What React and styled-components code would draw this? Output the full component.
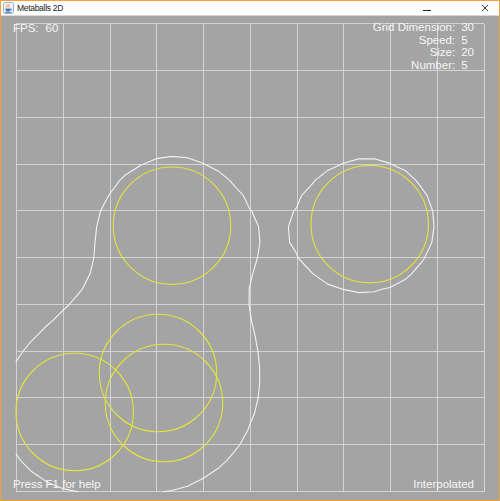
import React, { useMemo } from 'react';
import styled, { createGlobalStyle } from 'styled-components';

const GlobalStyle = createGlobalStyle`
  html, body {
    margin: 0;
    padding: 0;
    background: #ffffff;
  }
`;

// page coordinates of the board (taken from the window at 500x501)
const GRID_X = 16;
const GRID_Y = 24.25;
const GRID_SIZE = 467.5;
const GRID_DIM = 30;
const RADIUS = 58.7;

const BALLS = [
  [172, 225.7],
  [369.7, 224.2],
  [74.7, 412],
  [158, 373],
  [164, 403],
];

const Window = styled.div`
  width: 500px;
  height: 501px;
  box-sizing: border-box;
  border: 1px solid #f0a13a;
  display: flex;
  flex-direction: column;
  overflow: hidden;
`;

const TitleBar = styled.div`
  height: 14px;
  flex: none;
  display: flex;
  align-items: center;
  background: #ffffff;
  border-bottom: 1px solid #d9d9d9;
  padding-left: 2px;
`;

const Title = styled.span`
  margin-left: 3px;
  font-family: 'Liberation Sans', Arial, sans-serif;
  font-size: 8.5px;
  letter-spacing: -0.3px;
  color: #1a1a1a;
  line-height: 14px;
`;

const Controls = styled.div`
  margin-left: auto;
  display: flex;
  align-items: center;
  height: 14px;
`;

const ControlButton = styled.div`
  width: ${(p) => p.$width}px;
  height: 14px;
  display: flex;
  align-items: center;
  justify-content: center;
`;

const Canvas = styled.div`
  position: relative;
  flex: 1;
  background: #a4a4a4;
  overflow: hidden;
`;

const Board = styled.svg`
  display: block;
`;

const Hud = styled.div`
  position: absolute;
  ${(p) => p.$top !== undefined && `top: ${p.$top}px;`}
  ${(p) => p.$bottom !== undefined && `bottom: ${p.$bottom}px;`}
  ${(p) => p.$left !== undefined && `left: ${p.$left}px;`}
  ${(p) => p.$right !== undefined && `right: ${p.$right}px;`}
  font-family: 'Liberation Sans', Arial, sans-serif;
  font-size: 11.5px;
  line-height: 12.5px;
  color: #f6f6f6;
  white-space: nowrap;
`;

const FpsRow = styled.div`
  display: flex;
  gap: 7px;
`;

const Stats = styled.div`
  display: grid;
  grid-template-columns: auto auto;
  column-gap: 6px;
`;

const StatLabel = styled.span`
  text-align: right;
`;

const StatValue = styled.span`
  text-align: left;
`;

function field(x, y) {
  let s = 0;
  for (const [cx, cy] of BALLS) {
    const dx = x - cx;
    const dy = y - cy;
    s += (RADIUS * RADIUS) / (dx * dx + dy * dy + 1e-6);
  }
  return s;
}

// marching squares with linear interpolation
function buildContour() {
  const step = GRID_SIZE / GRID_DIM;
  const v = [];
  for (let j = 0; j <= GRID_DIM; j++) {
    const row = [];
    for (let i = 0; i <= GRID_DIM; i++) row.push(field(GRID_X + i * step, GRID_Y + j * step));
    v.push(row);
  }
  const lerp = (a, b, va, vb) => {
    const t = (1 - va) / (vb - va);
    return [a[0] + (b[0] - a[0]) * t, a[1] + (b[1] - a[1]) * t];
  };
  let d = '';
  for (let j = 0; j < GRID_DIM; j++) {
    for (let i = 0; i < GRID_DIM; i++) {
      const x = GRID_X + i * step;
      const y = GRID_Y + j * step;
      const tl = [x, y], tr = [x + step, y], br = [x + step, y + step], bl = [x, y + step];
      const a = v[j][i], b = v[j][i + 1], c = v[j + 1][i + 1], e = v[j + 1][i];
      const idx = (a >= 1 ? 8 : 0) | (b >= 1 ? 4 : 0) | (c >= 1 ? 2 : 0) | (e >= 1 ? 1 : 0);
      if (idx === 0 || idx === 15) continue;
      const T = () => lerp(tl, tr, a, b);
      const R = () => lerp(tr, br, b, c);
      const B = () => lerp(bl, br, e, c);
      const L = () => lerp(tl, bl, a, e);
      const center = field(x + step / 2, y + step / 2) >= 1;
      let segs = [];
      switch (idx) {
        case 1: case 14: segs = [[L, B]]; break;
        case 2: case 13: segs = [[B, R]]; break;
        case 3: case 12: segs = [[L, R]]; break;
        case 4: case 11: segs = [[T, R]]; break;
        case 6: case 9: segs = [[T, B]]; break;
        case 7: case 8: segs = [[T, L]]; break;
        case 5: segs = center ? [[T, L], [B, R]] : [[T, R], [L, B]]; break;
        case 10: segs = center ? [[T, R], [L, B]] : [[T, L], [B, R]]; break;
        default: break;
      }
      for (const [p, q] of segs) {
        const P = p();
        const Q = q();
        d += `M${P[0].toFixed(2)} ${P[1].toFixed(2)}L${Q[0].toFixed(2)} ${Q[1].toFixed(2)}`;
      }
    }
  }
  return d;
}

function JavaIcon() {
  return (
    <svg width="11" height="12" viewBox="0 0 11 12">
      <rect x="0.5" y="0.5" width="10" height="11" rx="1" fill="#eef2f8" stroke="#9fb3cf" />
      <path d="M4 2.5c1 1-1 1.5 0 3M6 2c1 1-1 1.8 0 3.4" stroke="#e2892e" strokeWidth="0.9" fill="none" />
      <path d="M2.5 6.5h5v1.6c0 1-1 1.6-2.5 1.6S2.5 9.1 2.5 8.1z" fill="#4a78b8" />
      <path d="M7.5 7h0.8c0.8 0 0.8 1.3 0 1.3H7.3" stroke="#4a78b8" strokeWidth="0.7" fill="none" />
      <rect x="2" y="10" width="6.5" height="0.8" fill="#4a78b8" />
    </svg>
  );
}

export default function App() {
  const contour = useMemo(buildContour, []);
  const lines = [];
  for (let k = 0; k <= 10; k++) {
    const gx = Math.round(GRID_X + (k * GRID_SIZE) / 10) + 0.5;
    const gy = Math.round(GRID_Y + (k * GRID_SIZE) / 10) - 0.5;
    lines.push(<line key={`v${k}`} x1={gx} y1={GRID_Y} x2={gx} y2={GRID_Y + GRID_SIZE} />);
    lines.push(<line key={`h${k}`} x1={GRID_X} y1={gy} x2={GRID_X + GRID_SIZE} y2={gy} />);
  }

  return (
    <>
      <GlobalStyle />
      <Window>
        <TitleBar>
          <JavaIcon />
          <Title>Metaballs 2D</Title>
          <Controls>
            <ControlButton $width={86}>
              <svg width="8" height="8" viewBox="0 0 8 8">
                <line x1="0" y1="6.5" x2="8" y2="6.5" stroke="#222" strokeWidth="1" />
              </svg>
            </ControlButton>
            <ControlButton $width={29}>
              <svg width="8" height="8" viewBox="0 0 8 8">
                <path d="M1 1L7 7M7 1L1 7" stroke="#222" strokeWidth="0.9" />
              </svg>
            </ControlButton>
          </Controls>
        </TitleBar>
        <Canvas>
          <Board width="498" height="484" viewBox="1 16 498 484">
            <g stroke="#d3d3d3" strokeWidth="1" shapeRendering="crispEdges">{lines}</g>
            <g fill="none" stroke="#e4e43c" strokeWidth="1.1">
              {BALLS.map(([cx, cy], i) => (
                <circle key={i} cx={cx} cy={cy} r={RADIUS} />
              ))}
            </g>
            <path d={contour} fill="none" stroke="#f2f2f2" strokeWidth="1.1" strokeLinecap="round" />
          </Board>
          <Hud $top={6} $left={12}>
            <FpsRow>
              <span>FPS:</span>
              <span>60</span>
            </FpsRow>
          </Hud>
          <Hud $top={5} $right={25}>
            <Stats>
              <StatLabel>Grid Dimension:</StatLabel>
              <StatValue>30</StatValue>
              <StatLabel>Speed:</StatLabel>
              <StatValue>5</StatValue>
              <StatLabel>Size:</StatLabel>
              <StatValue>20</StatValue>
              <StatLabel>Number:</StatLabel>
              <StatValue>5</StatValue>
            </Stats>
          </Hud>
          <Hud $bottom={10} $left={12}>Press F1 for help</Hud>
          <Hud $bottom={10} $right={25}>Interpolated</Hud>
        </Canvas>
      </Window>
    </>
  );
}
